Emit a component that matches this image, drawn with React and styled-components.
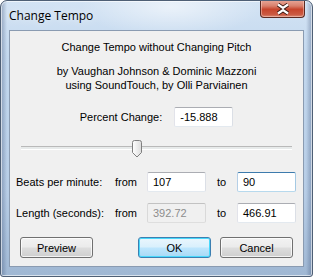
import React from "react"
import styled, { createGlobalStyle, css } from "styled-components"

const Global = createGlobalStyle`
  html, body {
    margin: 0;
    padding: 0;
    background: #ffffff;
  }
  body {
    font-family: "Liberation Sans", Arial, sans-serif;
    font-size: 11px;
    color: #000;
  }
`

const Window = styled.div`
  width: 313px;
  height: 277px;
  box-sizing: border-box;
  display: flex;
  flex-direction: column;
  padding: 0 8px 9px 8px;
  border: 1px solid #4e5f75;
  border-radius: 7px 7px 3px 3px;
  background:
    linear-gradient(90deg, rgba(40, 60, 100, 0.35) 0px, rgba(255, 255, 255, 0) 6px),
    linear-gradient(270deg, rgba(40, 60, 100, 0.35) 0px, rgba(255, 255, 255, 0) 6px),
    radial-gradient(ellipse 90px 30px at 170px 6px, rgba(255, 255, 255, 0.55), rgba(255, 255, 255, 0)),
    linear-gradient(180deg, #d3e3f4 0%, #c3d8ee 20%, #b7cde6 70%, #9fb7d3 100%);
  box-shadow: inset 0 0 0 1px rgba(255, 255, 255, 0.6);
  overflow: hidden;
`

const TitleBar = styled.div`
  height: 29px;
  display: flex;
  align-items: flex-start;
  justify-content: space-between;
`

const Title = styled.div`
  font-family: "Open Sans", "Liberation Sans", sans-serif;
  font-size: 12px;
  padding-top: 6px;
  padding-left: 0;
  color: #000;
  text-shadow: 0 0 8px rgba(255, 255, 255, 0.9);
`

const CloseButton = styled.div`
  width: 45px;
  height: 18px;
  margin-top: -1px;
  margin-right: -1px;
  box-sizing: border-box;
  border: 1px solid #5b2a22;
  border-top: none;
  border-radius: 0 0 4px 4px;
  background: linear-gradient(180deg, #e9a99a 0%, #d9806c 35%, #c7452c 55%, #cb5a42 85%, #d98a76 100%);
  box-shadow: inset 0 0 0 1px rgba(255, 220, 210, 0.45);
  display: flex;
  align-items: center;
  justify-content: center;
`

const Client = styled.div`
  flex: 1;
  display: flex;
  flex-direction: column;
  background: #f0f0f0;
  border: 1px solid #8a9bb1;
  padding-top: 9px;
`

const Line = styled.div`
  text-align: center;
  line-height: 14px;
  margin-top: ${p => p.$top || 0}px;
`

const PercentRow = styled.div`
  display: flex;
  align-items: center;
  justify-content: center;
  gap: 12px;
  margin-top: 15px;
  padding-left: 0;
`

const TextBox = styled.div`
  width: 59px;
  height: 20px;
  box-sizing: border-box;
  display: flex;
  align-items: center;
  padding-left: 5px;
  border: 1px solid #abadb3;
  border-color: #abadb3 #dbdfe6 #e3e9ef #e2e3ea;
  border-radius: 2px;
  background: #ffffff;
  ${p => p.$focused && css`
    border-color: #3d7bad #a4c9e3 #b7d9ed #b5cfe7;
  `}
  ${p => p.$disabled && css`
    background: #f0f0f0;
    color: #8d8d8d;
    border-color: #c2c2c2 #d9d9d9 #dedede #d9d9d9;
  `}
`

const SliderRow = styled.div`
  margin-top: 13px;
  height: 18px;
  padding: 0 11px 0 11px;
  position: relative;
  display: flex;
  align-items: flex-start;
`

const Track = styled.div`
  flex: 1;
  margin-top: 6px;
  height: 4px;
  box-sizing: border-box;
  border-top: 1px solid #b9b9b9;
  border-bottom: 1px solid #ffffff;
  background: #e7eaea;
`

const Thumb = styled.svg`
  position: absolute;
  left: 121px;
  top: 0;
`

const Grid = styled.div`
  display: grid;
  grid-template-columns: 99px 32px 59px 31px 59px;
  grid-auto-rows: 20px;
  row-gap: 11px;
  align-items: center;
  margin-top: 14px;
  padding-left: 6px;
`

const Cell = styled.div`
  padding-left: ${p => p.$pad || 0}px;
`

const ButtonRow = styled.div`
  display: flex;
  align-items: center;
  margin-top: 14px;
  padding: 0 10px;
`

const Button = styled.div`
  width: 73px;
  height: 21px;
  box-sizing: border-box;
  display: flex;
  align-items: center;
  justify-content: center;
  border: 1px solid #707070;
  border-radius: 3px;
  background: linear-gradient(180deg, #f2f2f2 0%, #ebebeb 48%, #dddddd 52%, #cfcfcf 100%);
  box-shadow: inset 0 0 0 1px rgba(255, 255, 255, 0.75);
  margin-left: ${p => p.$gap || 0}px;
  ${p => p.$default && css`
    border-color: #3c7fb1;
    background: linear-gradient(180deg, #eaf6fd 0%, #d9f0fc 48%, #bee6fd 52%, #a7d9f5 100%);
    box-shadow: inset 0 0 0 1px #48d8fb;
  `}
`

const Spacer = styled.div`
  flex: 1;
`

const CloseGlyph = () => (
  <svg width="16" height="12" viewBox="0 0 16 12">
    <path
      d="M3 1.5 L8 5 L13 1.5 M3 10.5 L8 7 L13 10.5"
      fill="none"
      stroke="#3a1a14"
      strokeWidth="4"
      strokeLinejoin="round"
    />
    <path
      d="M3 1.5 L8 5 L13 1.5 M3 10.5 L8 7 L13 10.5"
      fill="none"
      stroke="#ffffff"
      strokeWidth="2.2"
    />
  </svg>
)

const ThumbShape = () => (
  <Thumb width="12" height="18" viewBox="0 0 12 18">
    <defs>
      <linearGradient id="tg" x1="0" y1="0" x2="1" y2="0">
        <stop offset="0" stopColor="#ffffff" />
        <stop offset="1" stopColor="#dcdcdc" />
      </linearGradient>
    </defs>
    <path
      d="M1.5 2.5 Q1.5 0.5 3.5 0.5 L8.5 0.5 Q10.5 0.5 10.5 2.5 L10.5 12.5 L6 17 L1.5 12.5 Z"
      fill="url(#tg)"
      stroke="#7f7f7f"
    />
  </Thumb>
)

export default function App() {
  return (
    <>
      <Global />
      <Window>
        <TitleBar>
          <Title>Change Tempo</Title>
          <CloseButton>
            <CloseGlyph />
          </CloseButton>
        </TitleBar>
        <Client>
          <Line>Change Tempo without Changing Pitch</Line>
          <Line $top={10}>by Vaughan Johnson &amp; Dominic Mazzoni</Line>
          <Line>using SoundTouch, by Olli Parviainen</Line>
          <PercentRow>
            <span>Percent Change:</span>
            <TextBox>-15.888</TextBox>
          </PercentRow>
          <SliderRow>
            <Track />
            <ThumbShape />
          </SliderRow>
          <Grid>
            <Cell>Beats per minute:</Cell>
            <Cell>from</Cell>
            <TextBox>107</TextBox>
            <Cell $pad={11}>to</Cell>
            <TextBox $focused>90</TextBox>
            <Cell>Length (seconds):</Cell>
            <Cell>from</Cell>
            <TextBox $disabled>392.72</TextBox>
            <Cell $pad={11}>to</Cell>
            <TextBox>466.91</TextBox>
          </Grid>
          <ButtonRow>
            <Button>Preview</Button>
            <Spacer />
            <Button $default>OK</Button>
            <Button $gap={9}>Cancel</Button>
          </ButtonRow>
        </Client>
      </Window>
    </>
  )
}
